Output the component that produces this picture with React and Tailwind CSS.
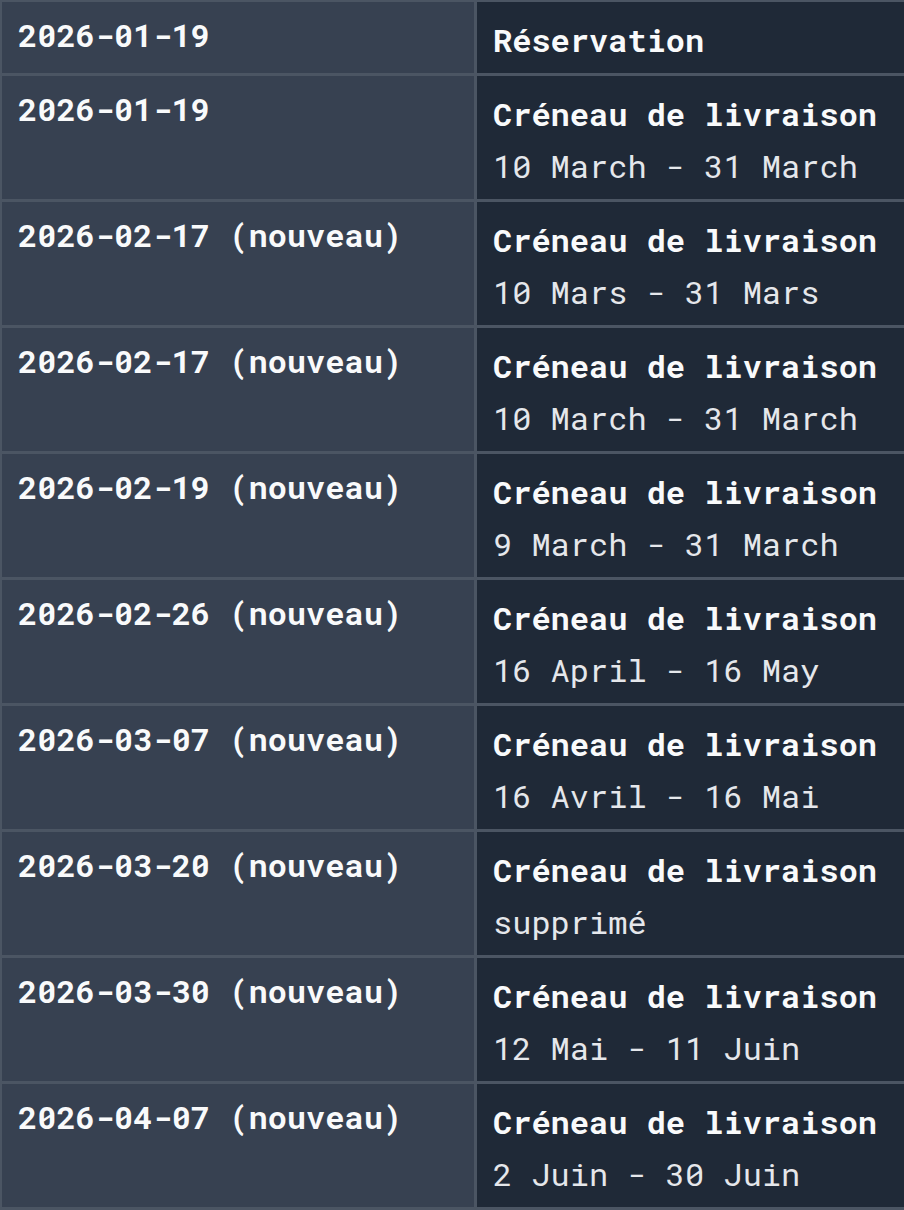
import React from 'react';

const rows = [
  { date: '2026-01-19', title: 'Réservation' },
  { date: '2026-01-19', title: 'Créneau de livraison', detail: '10 March - 31 March' },
  { date: '2026-02-17 (nouveau)', title: 'Créneau de livraison', detail: '10 Mars - 31 Mars' },
  { date: '2026-02-17 (nouveau)', title: 'Créneau de livraison', detail: '10 March - 31 March' },
  { date: '2026-02-19 (nouveau)', title: 'Créneau de livraison', detail: '9 March - 31 March' },
  { date: '2026-02-26 (nouveau)', title: 'Créneau de livraison', detail: '16 April - 16 May' },
  { date: '2026-03-07 (nouveau)', title: 'Créneau de livraison', detail: '16 Avril - 16 Mai' },
  { date: '2026-03-20 (nouveau)', title: 'Créneau de livraison', detail: 'supprimé' },
  { date: '2026-03-30 (nouveau)', title: 'Créneau de livraison', detail: '12 Mai - 11 Juin' },
  { date: '2026-04-07 (nouveau)', title: 'Créneau de livraison', detail: '2 Juin - 30 Juin' },
];

export default function App() {
  return (
    <div
      className="w-[904px] h-[1210px] overflow-hidden bg-[#1f2937] text-[32px] leading-[52px]"
      style={{ fontFamily: '"Roboto Mono", "DejaVu Sans Mono", "Liberation Mono", monospace' }}
    >
      <div className="grid w-[960px] grid-cols-[475px_1fr] border-t-2 border-l-2 border-[#4b5563]">
        {rows.map((r, i) => (
          <React.Fragment key={i}>
            <div className="min-h-[72px] bg-[#374151] border-r-[3px] border-b-[3px] border-[#4b5563] pl-4 pt-[7px] font-bold text-[#f9fafb]">
              {r.date}
            </div>
            <div className="min-h-[72px] bg-[#1f2937] border-b-[3px] border-[#4b5563] pl-4 pt-[12px] pb-[7px]">
              <div className="font-bold text-[#f9fafb]">{r.title}</div>
              {r.detail && <div className="text-[#e5e7eb]">{r.detail}</div>}
            </div>
          </React.Fragment>
        ))}
      </div>
    </div>
  );
}
